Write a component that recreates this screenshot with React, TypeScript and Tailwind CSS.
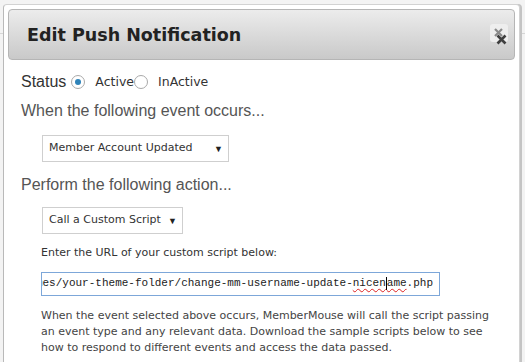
// Edit Push Notification dialog

const sans = "font-['DejaVu_Sans',sans-serif]";
const arial = "font-['Liberation_Sans',Arial,sans-serif]";

function Radio({ checked }: { checked?: boolean }) {
    return (
        <span className="flex h-[14px] w-[14px] items-center justify-center rounded-full border border-[#a9a9a9] bg-white">
            {checked && <span className="h-[6px] w-[6px] rounded-full bg-[#2f83b9]" />}
        </span>
    );
}

function FakeSelect({ label, width }: { label: string; width: string }) {
    return (
        <div className={`flex h-[27px] items-center justify-between border border-[#cfcfcf] bg-white pl-[6px] pr-[5px] ${width}`}>
            <span className={`${sans} text-[11px] text-[#333]`}>{label}</span>
            <span className="text-[9px] text-[#222]">▼</span>
        </div>
    );
}

function CloseButton() {
    return (
        <div className="relative h-[18px] w-[18px] rounded-[3px] bg-[#eeeeee]">
            {/* faded icon behind */}
            <svg className="absolute left-[4px] top-[4px]" width="9" height="9" viewBox="0 0 9 9">
                <path d="M1 1 L8 8 M8 1 L1 8" stroke="#8a8a8a" strokeWidth="2.2" />
            </svg>
            {/* darker icon on top */}
            <svg className="absolute left-[6px] top-[10px]" width="11" height="11" viewBox="0 0 11 11">
                <path d="M1.5 1.5 L9.5 9.5 M9.5 1.5 L1.5 9.5" stroke="#3f3f3f" strokeWidth="2.6" />
            </svg>
        </div>
    );
}

export default function App() {
    return (
        <div className="relative h-[362px] w-[525px] overflow-hidden bg-[#f3f3f3]">
            {/* page line behind the dialog */}
            <div className="absolute left-0 top-[33px] h-px w-[525px] bg-[#d6d6d6]" />

            <div className="relative ml-[3px] mt-[4px] h-[400px] w-[517px] rounded-t-[4px] border border-[#d2d2d2] border-l-[#b9b9b9] bg-white p-[4px] shadow-[2px_0_0_#c4c4c4]">
                {/* Header */}
                <div className="flex h-[51px] items-center justify-between rounded-[4px] border border-[#b5b5b5] bg-gradient-to-b from-[#ececec] to-[#c9c9c9] pl-[18px] pr-[6px]">
                    <h1 className={`${sans} text-[17.5px] font-bold text-[#222] pt-[2px]`}>Edit Push Notification</h1>
                    <div className="mb-[4px]">
                        <CloseButton />
                    </div>
                </div>

                {/* Body */}
                <div className="pl-[13px] pt-[10px]">
                    <div className="flex items-center">
                        <span className={`${arial} text-[16px] text-[#333]`}>Status</span>
                        <span className="ml-[5px]"><Radio checked /></span>
                        <span className={`${sans} ml-[10px] text-[12.5px] text-[#333]`}>Active</span>
                        <Radio />
                        <span className={`${sans} ml-[10px] text-[12.5px] text-[#333]`}>InActive</span>
                    </div>

                    <p className={`${arial} mt-[5px] text-[16px] text-[#555]`}>When the following event occurs...</p>

                    <div className="ml-[21px] mt-[12px]">
                        <FakeSelect label="Member Account Updated" width="w-[187px]" />
                    </div>

                    <p className={`${arial} mt-[11px] text-[16px] text-[#555]`}>Perform the following action...</p>

                    <div className="ml-[21px] mt-[10px]">
                        <FakeSelect label="Call a Custom Script" width="w-[141px]" />
                    </div>

                    <div className="ml-[20px] mt-[11px]">
                        <p className={`${sans} text-[11px] text-[#333]`}>Enter the URL of your custom script below:</p>

                        <div className="mt-[10px] flex h-[24px] w-[399px] items-center justify-end overflow-hidden border border-[#7da7d9] bg-white pr-[6px]">
                            <span className="whitespace-nowrap font-['Liberation_Mono',monospace] text-[11px] text-[#222]">
                                themes/your-theme-folder/change-mm-username-update-
                                <span className="underline decoration-wavy decoration-[#d22] decoration-1 underline-offset-2">
                                    nicen
                                    <span className="inline-block h-[13px] w-0 border-l border-black align-middle" />
                                    ame
                                </span>
                                .php
                            </span>
                        </div>

                        <p className={`${sans} mt-[12px] w-[460px] text-[11px] leading-[16px] text-[#444]`}>
                            When the event selected above occurs, MemberMouse will call the script passing an event type and any relevant data. Download the sample scripts below to see how to respond to different events and access the data passed.
                        </p>
                    </div>
                </div>
            </div>
        </div>
    );
}
